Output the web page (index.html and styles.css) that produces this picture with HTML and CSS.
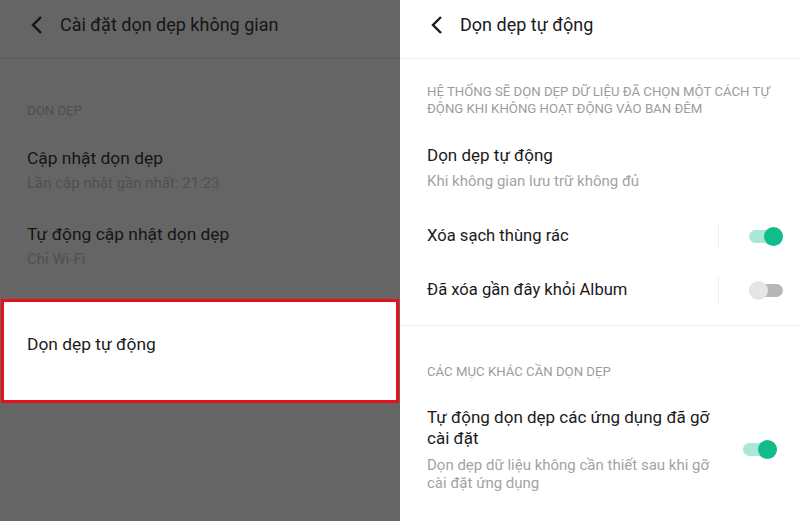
FILE: index.html
```html
<!DOCTYPE html>
<html lang="vi">
<head>
    <meta charset="UTF-8">
    <meta name="viewport" content="width=device-width, initial-scale=1.0">
    <title>Dọn dẹp tự động</title>
    <link rel="stylesheet" href="styles.css">
</head>
<body>
    <div class="screens">
        <div class="panel dimmed">
            <div class="topbar">
                <svg class="back" width="14" height="20" viewBox="0 0 14 20"><path d="M11 2 L3 10 L11 18" fill="none" stroke="currentColor" stroke-width="2.4"/></svg>
                <span class="title">Cài đặt dọn dẹp không gian</span>
            </div>
            <div class="caps first">DỌN DẸP</div>
            <div class="item">
                <div class="item-title">Cập nhật dọn dẹp</div>
                <div class="item-sub">Lần cập nhật gần nhất: 21:23</div>
            </div>
            <div class="item">
                <div class="item-title">Tự động cập nhật dọn dẹp</div>
                <div class="item-sub">Chỉ Wi-Fi</div>
            </div>
            <div class="highlight">
                <div class="item-title">Dọn dẹp tự động</div>
            </div>
        </div>

        <div class="panel light">
            <div class="topbar">
                <svg class="back" width="14" height="20" viewBox="0 0 14 20"><path d="M11 2 L3 10 L11 18" fill="none" stroke="currentColor" stroke-width="2.4"/></svg>
                <span class="title">Dọn dẹp tự động</span>
            </div>
            <div class="caps note">HỆ THỐNG SẼ DỌN DẸP DỮ LIỆU ĐÃ CHỌN MỘT CÁCH TỰ ĐỘNG KHI KHÔNG HOẠT ĐỘNG VÀO BAN ĐÊM</div>
            <div class="item">
                <div class="item-title">Dọn dẹp tự động</div>
                <div class="item-sub">Khi không gian lưu trữ không đủ</div>
            </div>
            <div class="switch-row first-row">
                <span class="item-title">Xóa sạch thùng rác</span>
                <span class="vline"></span>
                <span class="toggle on"></span>
            </div>
            <div class="switch-row">
                <span class="item-title">Đã xóa gần đây khỏi Album</span>
                <span class="vline"></span>
                <span class="toggle off"></span>
            </div>
            <div class="divider"></div>
            <div class="caps second">CÁC MỤC KHÁC CẦN DỌN DẸP</div>
            <div class="big-row">
                <div class="big-text">
                    <div class="item-title two">Tự động dọn dẹp các ứng dụng đã gỡ cài đặt</div>
                    <div class="item-sub two">Dọn dẹp dữ liệu không cần thiết sau khi gỡ cài đặt ứng dụng</div>
                </div>
                <span class="toggle on inset"></span>
            </div>
        </div>
    </div>
</body>
</html>
```

FILE: styles.css
```css
body {
    margin: 0;
    font-family: Roboto, "Noto Sans", sans-serif;
    overflow: hidden;
}
.screens {
    display: flex;
    width: 800px;
    height: 521px;
}
.panel {
    width: 400px;
    height: 521px;
    box-sizing: border-box;
}
.dimmed {
    background-color: #656565;
    color: #151515;
}
.light {
    background-color: #fff;
    color: #1a1a1a;
}
.topbar {
    display: flex;
    align-items: center;
    height: 50px;
    padding-bottom: 8px;
}
.dimmed .topbar {
    border-bottom: 1px solid #5c5c5c;
}
.light .topbar {
    border-bottom: 1px solid #eeeeee;
}
.back {
    margin-left: 30px;
    margin-right: 16px;
}
.title {
    font-size: 18px;
    line-height: 24px;
}
.caps {
    font-size: 13.2px;
    line-height: 17px;
    padding-left: 27px;
}
.dimmed .caps {
    color: #4e4e4e;
}
.light .caps {
    color: #9c9c9c;
}
.caps.first {
    margin-top: 43px;
}
.caps.note {
    margin-top: 24px;
    padding-right: 18px;
}
.caps.second {
    margin-top: 37px;
}
.item {
    padding-left: 27px;
}
.item-title {
    font-size: 17px;
    line-height: 22px;
}
.dimmed .item-title {
    font-size: 17.4px;
}
.item-sub {
    font-size: 15px;
    line-height: 20px;
    margin-top: 4px;
}
.light .item-sub {
    margin-top: 5px;
}
.dimmed .item-sub {
    color: #505050;
}
.light .item-sub {
    color: #a3a3a3;
}
.dimmed .item {
    margin-top: 28px;
}
.dimmed .item + .item {
    margin-top: 30px;
}
.light .item {
    margin-top: 27px;
}
.highlight {
    margin-top: 30px;
    margin-left: 1px;
    width: 398px;
    height: 104px;
    box-sizing: border-box;
    border: 3px solid #e8111a;
    background-color: #fff;
    padding: 31px 0 0 23px;
    color: #1c1c1c;
}
.switch-row {
    display: flex;
    align-items: center;
    height: 54px;
    padding-left: 27px;
}
.switch-row.first-row {
    margin-top: 18px;
}
.switch-row .item-title {
    flex: 1;
    font-size: 16.6px;
}
.vline {
    width: 1px;
    height: 26px;
    background-color: #eeeeee;
    margin-right: 30px;
}
.toggle {
    position: relative;
    width: 34px;
    height: 13px;
    border-radius: 7px;
    margin-right: 17px;
}
.toggle::after {
    content: "";
    position: absolute;
    top: -3px;
    width: 19px;
    height: 19px;
    border-radius: 50%;
}
.toggle.on {
    background-color: #a9e8d4;
}
.toggle.on::after {
    right: 0;
    background-color: #12bd8c;
}
.toggle.off {
    background-color: #b7b7b7;
}
.toggle.off::after {
    left: 0;
    background-color: #e6e6e6;
}
.toggle.inset {
    margin-right: 23px;
}
.divider {
    margin-top: 8px;
    height: 1px;
    background-color: #eeeeee;
}
.big-row {
    display: flex;
    align-items: center;
    padding-left: 27px;
    margin-top: 27px;
}
.big-text {
    width: 296px;
    margin-right: auto;
}
.item-title.two {
    line-height: 21px;
}
.light .item-sub.two {
    line-height: 18px;
    margin-top: 7px;
}
```
